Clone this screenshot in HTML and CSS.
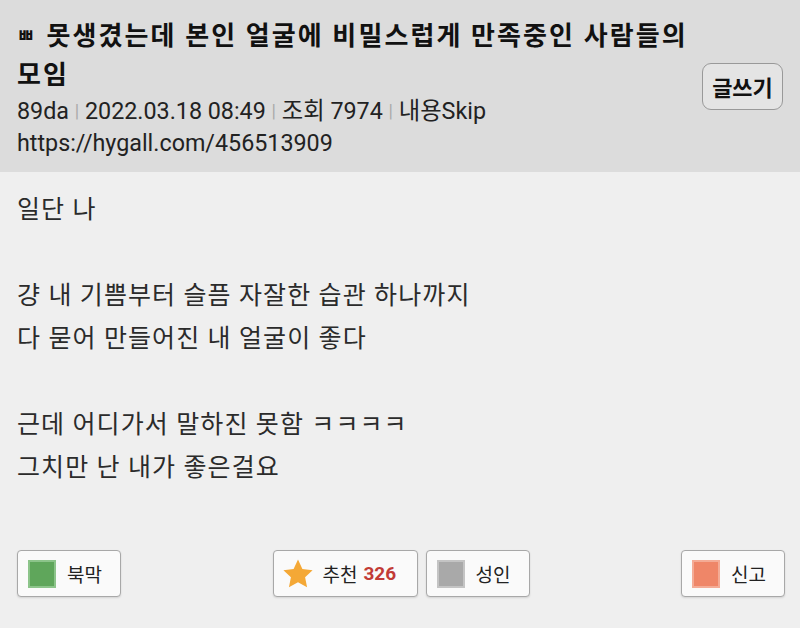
FILE: index.html
```html
<!DOCTYPE html>
<html>
  <head>
    <title>못생겼는데 본인 얼굴에 비밀스럽게 만족중인 사람들의 모임</title>
    <link rel="stylesheet" href="styles.css">
  </head>
  <body>
    <div class="post-head">
      <div class="head-info">
        <h1 class="title"><span class="tag">ㅃ</span>못생겼는데 본인 얼굴에 비밀스럽게 만족중인 사람들의 모임</h1>
        <div class="meta">
          89da <span class="sep">|</span> 2022.03.18 08:49 <span class="sep">|</span> 조회 7974 <span class="sep">|</span> 내용Skip
        </div>
        <div class="meta">https://hygall.com/456513909</div>
      </div>
      <button class="write-btn">글쓰기</button>
    </div>

    <div class="post-body">
      <p>일단 나</p>
      <p>&nbsp;</p>
      <p>걍 내 기쁨부터 슬픔 자잘한 습관 하나까지</p>
      <p>다 묻어 만들어진 내 얼굴이 좋다</p>
      <p>&nbsp;</p>
      <p>근데 어디가서 말하진 못함 ㅋㅋㅋㅋ</p>
      <p>그치만 난 내가 좋은걸요</p>
    </div>

    <div class="actions">
      <div class="group">
        <button class="act"><span class="swatch green"></span>북막</button>
      </div>
      <div class="group center">
        <button class="act wide">
          <svg class="star" viewBox="0 0 24 24" width="34" height="34">
            <path d="M12 1.8l3.1 6.6 7.2.9-5.3 5 1.4 7.1L12 17.9l-6.4 3.5 1.4-7.1-5.3-5 7.2-.9z" fill="#f4a836"/>
          </svg>
          추천 <b class="count">326</b>
        </button>
        <button class="act"><span class="swatch gray"></span>성인</button>
      </div>
      <div class="group right">
        <button class="act"><span class="swatch orange"></span>신고</button>
      </div>
    </div>
  </body>
</html>
```

FILE: styles.css
```css
html, body {
    margin: 0;
    padding: 0;
}

body {
    width: 800px;
    height: 628px;
    background: #efefef;
    font-family: Roboto, "Noto Sans CJK KR", sans-serif;
    color: #222;
    overflow: hidden;
}

/* header area */
.post-head {
    background: #dcdcdc;
    display: flex;
    align-items: center;
    height: 172px;
    box-sizing: border-box;
    padding: 17px 17px 14px 17px;
}
.head-info {
    flex: 1;
}
.title {
    margin: 0;
    font-size: 26px;
    line-height: 39px;
    font-weight: bold;
    letter-spacing: 2.1px;
    color: #111;
}
.title .tag {
    display: inline-block;
    font-size: 19px;
    line-height: 20px;
    letter-spacing: 0;
    margin-right: 12px;
    vertical-align: 2px;
}
.meta {
    font-size: 23.3px;
    line-height: 32px;
    color: #222;
}
.meta .sep {
    color: #aaa;
    font-size: 18px;
    vertical-align: 2px;
}
.write-btn {
    width: 81px;
    height: 47px;
    margin-bottom: 3px;
    border: 1px solid #999;
    border-radius: 9px;
    background: #e4e4e4;
    font-family: inherit;
    font-size: 22px;
    font-weight: bold;
    color: #111;
    padding: 0;
}

/* post content */
.post-body {
    padding: 16px 17px 0 17px;
    height: 362px;
}
.post-body p {
    margin: 0;
    font-size: 25px;
    line-height: 43px;
    letter-spacing: 1.1px;
    color: #2b2b2b;
}

/* bottom buttons */
.actions {
    display: grid;
    grid-template-columns: 1fr auto 1fr;
    padding: 0 15px 0 17px;
}
.group {
    display: flex;
    gap: 8px;
}
.group.right {
    justify-content: flex-end;
}
.act {
    display: flex;
    align-items: center;
    height: 47px;
    width: 104px;
    padding: 0 0 0 10px;
    border: 1px solid #a8a8a8;
    border-radius: 4px;
    background: #fafafa;
    box-shadow: 0 1px 2px rgba(0, 0, 0, 0.12);
    font-family: inherit;
    font-size: 19px;
    color: #222;
}
.act.wide {
    width: 145px;
    padding-left: 7px;
}
.star {
    margin-right: 8px;
}
.count {
    color: #c23b36;
    margin-left: 6px;
}
.swatch {
    width: 28px;
    height: 28px;
    margin-right: 11px;
    box-sizing: border-box;
}
.swatch.green {
    background: #5fa65b;
    border: 2px solid #8cc48a;
}
.swatch.gray {
    background: #a9a9a9;
    border: 2px solid #c4c4c4;
}
.swatch.orange {
    background: #ef8668;
    border: 2px solid #f4ab95;
}
```
